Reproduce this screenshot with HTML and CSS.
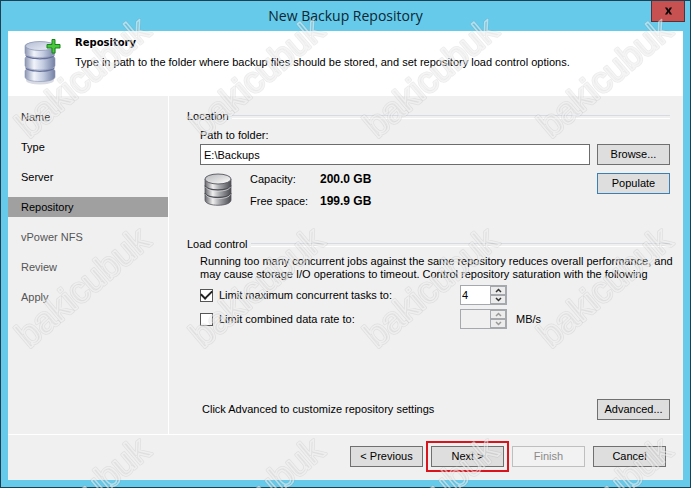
FILE: index.html
```html
<!DOCTYPE html>
<html lang="en">
<head>
<meta charset="utf-8">
<title>New Backup Repository</title>
<link rel="stylesheet" href="styles.css">
</head>
<body>
<div class="window">
  <header class="titlebar">
    <h1 class="title">New Backup Repository</h1>
    <button class="close" type="button" aria-label="Close">
      <svg width="9" height="8" viewBox="0 0 10 8"><path d="M1 0h2.500L5 2.500 6.500 0H9L6.400 4 9 8H6.500L5 5.500 3.500 8H1l2.600-4z" fill="#0b0808"/></svg>
    </button>
  </header>

  <section class="banner">
    <svg class="banner-icon" width="37" height="46" viewBox="0 0 37 46" aria-hidden="true">
      <defs>
        <linearGradient id="blue-side"><stop offset="0" stop-color="#8b95b3"/><stop offset=".3" stop-color="#f1f4fb"/><stop offset=".6" stop-color="#c3cce0"/><stop offset="1" stop-color="#7480a5"/></linearGradient>
        <linearGradient id="blue-top" x2="1" y2="1"><stop offset="0" stop-color="#b4bcd2"/><stop offset="1" stop-color="#eef2fa"/></linearGradient>
      </defs>
      <ellipse cx="16" cy="41.500" rx="14" ry="4" fill="#d8dbe3"/>
      <g fill="url(#blue-side)" stroke="#8b96b4" stroke-width=".6">
        <path d="M1 32c0-5 30-5 30 0v6c0 6-30 6-30 0z"/>
        <path d="M1 19.500c0-5 30-5 30 0v7c0 6-30 6-30 0z"/>
        <path d="M1 7c0-5 30-5 30 0v7c0 6-30 6-30 0z"/>
      </g>
      <path d="M1.500 15c1 5.500 28 5.500 29 0v2c-3 4.500-26 4.500-29 0zM1.500 27.500c1 5.500 28 5.500 29 0v2c-3 4.500-26 4.500-29 0z" fill="#65719a"/>
      <ellipse cx="16" cy="7" rx="14.500" ry="4.500" fill="url(#blue-top)" stroke="#8792b0" stroke-width=".7"/>
      <path d="M28 .500h3v5h5V9h-5v5h-3V9h-5V5.500h5z" fill="#4cc63c" stroke="#15851a"/>
    </svg>
    <div>
      <h2 class="banner-title">Repository</h2>
      <p class="banner-text">Type in path to the folder where backup files should be stored, and set repository load control options.</p>
    </div>
  </section>

  <div class="body">
    <nav class="steps" aria-label="Wizard steps">
      <a class="step visited" href="#name">Name</a>
      <a class="step" href="#type">Type</a>
      <a class="step" href="#server">Server</a>
      <a class="step current" href="#repository" aria-current="step">Repository</a>
      <a class="step pending" href="#vpower">vPower NFS</a>
      <a class="step pending" href="#review">Review</a>
      <a class="step pending" href="#apply">Apply</a>
    </nav>

    <main class="page">
      <section class="location">
        <h3 class="group-title">Location</h3>
        <div class="location-grid">
          <label class="path-label" for="path">Path to folder:</label>
          <input class="path" id="path" type="text" value="E:\Backups">
          <button class="btn" type="button">Browse...</button>
          <div class="disk">
            <svg width="28" height="34" viewBox="0 0 28 34" aria-hidden="true">
              <defs>
                <linearGradient id="gray-side"><stop offset="0" stop-color="#66676c"/><stop offset=".3" stop-color="#f0f0f1"/><stop offset=".55" stop-color="#a9aaae"/><stop offset="1" stop-color="#4b4c52"/></linearGradient>
                <linearGradient id="gray-top" x2="1" y2="1"><stop offset="0" stop-color="#b5b6b8"/><stop offset="1" stop-color="#fff"/></linearGradient>
              </defs>
              <path d="M1 6v21c0 7 26 7 26 0V6z" fill="url(#gray-side)" stroke="#55565c" stroke-width=".8"/>
              <path d="M1 12.500c1 6 25 6 26 0M1 20c1 6 25 6 26 0" fill="none" stroke="#4d4e55" stroke-width="1.300"/>
              <path d="M1.500 14c2 5.500 23 5.500 25 0M1.500 21.500c2 5.500 23 5.500 25 0" fill="none" stroke="#e0e0e3" stroke-width=".7"/>
              <ellipse cx="14" cy="6" rx="13" ry="5" fill="url(#gray-top)" stroke="#55565c" stroke-width=".9"/>
            </svg>
            <dl class="stats">
              <dt>Capacity:</dt><dd>200.0 GB</dd>
              <dt>Free space:</dt><dd>199.9 GB</dd>
            </dl>
          </div>
          <button class="btn focused" type="button">Populate</button>
        </div>
      </section>

      <section class="load">
        <h3 class="group-title">Load control</h3>
        <p class="load-text">Running too many concurrent jobs against the same repository reduces overall performance, and<br>may cause storage I/O operations to timeout. Control repository saturation with the following</p>
        <div class="limit">
          <input class="check" id="limit-tasks" type="checkbox" checked>
          <label for="limit-tasks">Limit maximum concurrent tasks to:</label>
          <div class="spinner">
            <input type="text" value="4" aria-label="Maximum concurrent tasks">
            <div class="arrows">
              <button type="button" aria-label="Increase"><svg width="7" height="5" viewBox="0 0 7 5"><path d="M1 4l2.500-2.500L6 4"/></svg></button>
              <button type="button" aria-label="Decrease"><svg width="7" height="5" viewBox="0 0 7 5"><path d="M1 1l2.500 2.500L6 1"/></svg></button>
            </div>
          </div>
        </div>
        <div class="limit">
          <input class="check" id="limit-rate" type="checkbox">
          <label for="limit-rate">Limit combined data rate to:</label>
          <div class="spinner disabled">
            <input type="text" value="" aria-label="Combined data rate" disabled>
            <div class="arrows">
              <button type="button" aria-label="Increase" disabled><svg width="7" height="5" viewBox="0 0 7 5"><path d="M1 4l2.500-2.500L6 4"/></svg></button>
              <button type="button" aria-label="Decrease" disabled><svg width="7" height="5" viewBox="0 0 7 5"><path d="M1 1l2.500 2.500L6 1"/></svg></button>
            </div>
          </div>
          <span>MB/s</span>
        </div>
      </section>

      <div class="advanced">
        <span>Click Advanced to customize repository settings</span>
        <button class="btn" type="button">Advanced...</button>
      </div>
    </main>
  </div>

  <footer class="footer">
    <button class="btn" type="button">&lt; Previous</button>
    <button class="btn highlight" type="button">Next &gt;</button>
    <button class="btn" type="button" disabled>Finish</button>
    <button class="btn" type="button">Cancel</button>
  </footer>
</div>

<svg class="watermark" aria-hidden="true">
  <defs>
    <pattern id="mark" width="174" height="210" patternUnits="userSpaceOnUse">
      <g transform="translate(29 139) rotate(-40.500)" fill="none" stroke-linejoin="round">
        <text class="mark-text mark-edge">bakicubuk</text>
        <text class="mark-text mark-core">bakicubuk</text>
      </g>
    </pattern>
  </defs>
  <rect width="100%" height="100%" fill="url(#mark)"/>
</svg>
</body>
</html>
```

FILE: styles.css
```css
* { box-sizing: border-box; }

body {
  margin: 0;
  font: 11px/13px "Liberation Sans", Arial, sans-serif;
  color: #000;
}

h1, h2, h3, p, dl, dd { margin: 0; }

button, input { font: inherit; color: inherit; }

svg { display: block; }

.window {
  display: flex;
  flex-direction: column;
  min-height: 100vh;
  padding: 0 7px 7px;
  border: 1px solid #1d4052;
  background: #66caea;
}

.titlebar {
  display: flex;
  align-items: flex-start;
  height: 30px;
}

.title {
  flex: 1;
  padding-left: 32px;
  font: 14px/30px "Open Sans", sans-serif;
  text-align: center;
  color: #0c2733;
}

.close {
  display: grid;
  place-items: center;
  width: 34px;
  height: 21px;
  margin-right: -2px;
  padding: 0;
  border: 1px solid #5b2f35;
  border-top: 0;
  background: #c75050;
}

.banner {
  display: flex;
  gap: 14px;
  height: 65px;
  padding: 5px 16px;
  background: #fff;
}

.banner-icon { margin-top: 3px; }

.banner-title {
  font: bold 10px/13px "DejaVu Sans", Verdana, sans-serif;
}

.banner-text { margin-top: 7px; }

.body {
  display: flex;
  flex: 1;
  background: #f0f0f0;
}

.steps {
  display: flex;
  flex: none;
  flex-direction: column;
  gap: 10px;
  width: 161px;
  padding-top: 11px;
  border-right: 1px solid #fff;
}

.step {
  padding: 0 13px;
  line-height: 20px;
  color: #000;
  text-decoration: none;
}

.visited { color: #333; }
.current { background: #a0a0a0; }
.pending { color: #555; }

.page {
  display: flex;
  flex: 1;
  flex-direction: column;
  min-width: 0;
  padding: 14px 13px 14px 18px;
}

.group-title {
  display: flex;
  align-items: center;
  gap: 3px;
  font: inherit;
}

.group-title::after {
  flex: 1;
  height: 2px;
  border-top: 1px solid #d5dbe0;
  border-bottom: 1px solid #fff;
  content: "";
}

.location-grid {
  display: grid;
  grid-template-columns: 1fr 73px;
  gap: 2px 7px;
  margin-top: 6px;
  padding-left: 13px;
}

.path-label { grid-column: 1 / -1; }

.path {
  width: 100%;
  height: 21px;
  padding: 0 3px;
  border: 1px solid #6c6c6c;
  background: #fff;
}

.btn {
  width: 73px;
  height: 21px;
  padding: 0;
  border: 1px solid #707070;
  border-radius: 0;
  background: #dedede;
}

.btn:disabled {
  border-color: #bfbfbf;
  background: #f2f2f2;
  color: #8a8a8a;
}

.focused {
  margin-top: 6px;
  border-color: #3c7fb1;
}

.disk {
  display: flex;
  gap: 18px;
  padding: 6px 0 0 4px;
}

.disk svg { flex: none; }

.stats {
  display: grid;
  grid-template-columns: 70px auto;
  align-content: start;
  margin-top: -5px;
  line-height: 22px;
}

.stats dd {
  font-size: 12px;
  font-weight: bold;
}

.load { margin-top: 26px; }

.load-text {
  margin: 4px 0 3px;
  padding-left: 13px;
  white-space: nowrap;
}

.limit {
  display: grid;
  grid-template-columns: 13px 247px 47px auto;
  align-items: center;
  height: 20px;
  margin-top: 4px;
  padding-left: 13px;
}

.limit label { padding-left: 6px; }
.limit span { padding-left: 9px; }

.check {
  display: grid;
  place-items: center;
  width: 13px;
  height: 13px;
  margin: 0;
  border: 1px solid #555;
  background: #fff;
  appearance: none;
}

.check:checked::before {
  width: 9px;
  height: 5px;
  margin-top: -3px;
  border: solid #222;
  border-width: 0 0 2px 2px;
  transform: rotate(-45deg);
  content: "";
}

.spinner {
  display: flex;
  height: 20px;
  border: 1px solid #a5a9ad;
  background: #fff;
}

.spinner input {
  flex: 1;
  min-width: 0;
  padding: 0 1px;
  border: 0;
  background: none;
}

.arrows {
  display: grid;
  grid-template-rows: 1fr 1fr;
  width: 16px;
}

.arrows button {
  display: grid;
  place-items: center;
  padding: 0;
  border: 1px solid #a5a9ad;
  background: #ececec;
}

.arrows path {
  fill: none;
  stroke: #333;
  stroke-width: 1.5;
}

.disabled { background: #f0f0f0; }
.disabled .arrows path { stroke: #999; }

.advanced {
  display: flex;
  align-items: center;
  justify-content: space-between;
  margin-top: auto;
  padding-left: 15px;
}

.footer {
  display: flex;
  justify-content: flex-end;
  gap: 8px;
  height: 46px;
  padding: 11px 17px 0 0;
  border-top: 1px solid #fff;
  background: #f0f0f0;
}

.highlight {
  outline: 2px solid #d9141c;
  outline-offset: 3px;
}

.watermark {
  position: absolute;
  top: 0;
  left: 0;
  width: 100%;
  height: 100%;
  pointer-events: none;
}

.mark-text { font: 36px "Liberation Sans", Arial, sans-serif; }

.mark-edge {
  stroke: #777;
  stroke-opacity: .15;
  stroke-width: 3;
}

.mark-core {
  stroke: #fff;
  stroke-opacity: .5;
  stroke-width: 1.5;
}
```
